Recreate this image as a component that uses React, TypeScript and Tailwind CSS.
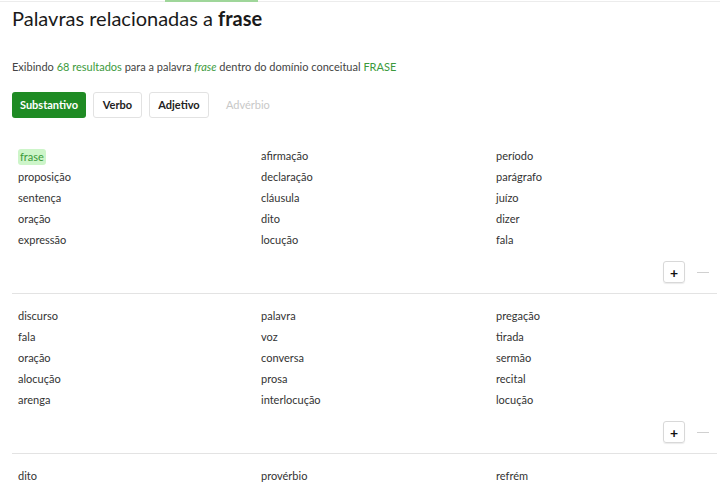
import React from "react";

const groups: string[][] = [
  ["frase", "afirmação", "período", "proposição", "declaração", "parágrafo", "sentença", "cláusula", "juízo", "oração", "dito", "dizer", "expressão", "locução", "fala"],
  ["discurso", "palavra", "pregação", "fala", "voz", "tirada", "oração", "conversa", "sermão", "alocução", "prosa", "recital", "arenga", "interlocução", "locução"],
  ["dito", "provérbio", "refrém"],
];

function Group({ words, last }: { words: string[]; last?: boolean }) {
  return (
    <div>
      <div className="grid grid-cols-[243px_235px_1fr] pl-[6px]">
        {words.map((w, i) => (
          <div key={i} className="h-[21px] flex items-center">
            {w === "frase" && i === 0 ? (
              <span className="bg-[#cdf5c9] text-[#3a9a3a] rounded-[3px] px-[2px] leading-[16px]">{w}</span>
            ) : (
              <span>{w}</span>
            )}
          </div>
        ))}
      </div>
      {!last && (
        <>
          <div className="flex justify-end items-center mt-[10px] pr-[8px] gap-[12px]">
            <button className="w-[22px] h-[22px] border border-[#d8d8d8] rounded-[3px] flex items-center justify-center text-[#111] font-bold text-[14px] shadow-[0_1px_1px_rgba(0,0,0,0.08)]">+</button>
            <span className="w-[12px] h-px bg-[#d0d0d0]" />
          </div>
          <div className="h-px bg-[#e3e3e3] mt-[10px] mb-[12px]" />
        </>
      )}
    </div>
  );
}

export default function App() {
  return (
    <div className="w-[720px] h-[486px] overflow-hidden bg-white text-[#333] relative" style={{ fontFamily: "Lato, 'Noto Sans', sans-serif" }}>
      <div className="h-px bg-[#ececec] mt-px" />
      <div className="absolute top-0 left-[165px] w-[93px] h-[2px] bg-[#9fd69a]" />
      <div className="pl-[12px] pr-[3px]">
        <h1 className="text-[20px] leading-[24px] text-[#1a1a1a] mt-[4px]">
          Palavras relacionadas a <b>frase</b>
        </h1>
        <p className="text-[11px] mt-[29px] text-[#444] leading-[16px]">
          Exibindo <span className="text-[#3c9a3c]">68 resultados</span> para a palavra <i className="text-[#3c9a3c]">frase</i> dentro do domínio conceitual <span className="text-[#3c9a3c]">FRASE</span>
        </p>
        <div className="flex items-center gap-[7px] mt-[17px] text-[11px] font-bold">
          <button className="h-[26px] w-[74px] rounded-[3px] bg-[#1f8b24] text-white">Substantivo</button>
          <button className="h-[26px] w-[49px] rounded-[3px] border border-[#e2e2e2] text-[#222]">Verbo</button>
          <button className="h-[26px] w-[60px] rounded-[3px] border border-[#e2e2e2] text-[#222]">Adjetivo</button>
          <span className="ml-[10px] text-[#c8c8c8] font-normal">Advérbio</span>
        </div>
        <div className="mt-[28px] text-[11px]">
          <Group words={groups[0]} />
          <Group words={groups[1]} />
          <Group words={groups[2]} last />
        </div>
      </div>
    </div>
  );
}
